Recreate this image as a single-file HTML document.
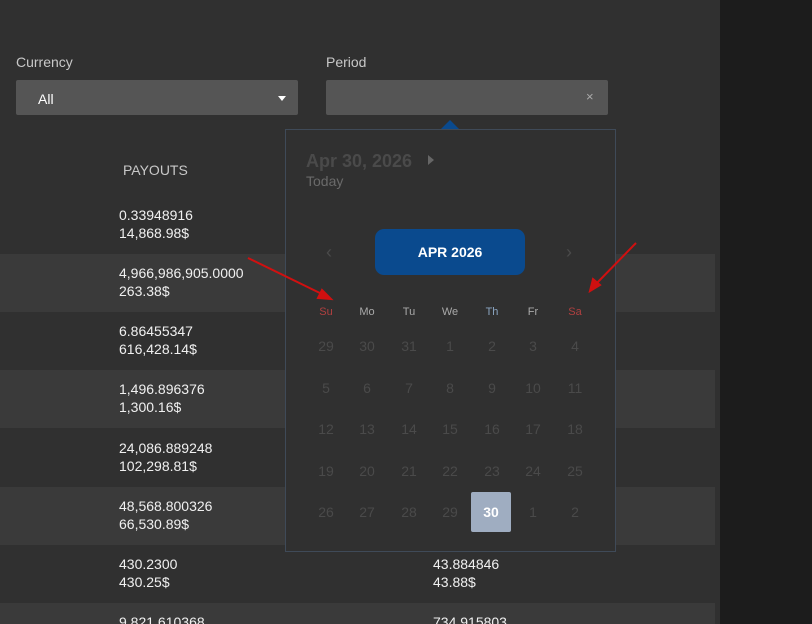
<!DOCTYPE html>
<html style="overflow:hidden;height:624px"><head><style>
body{margin:0;width:812px;height:624px;overflow:hidden;background:#303030;font-family:"Liberation Sans",sans-serif;position:relative}
.a{position:absolute}
.stripe{position:absolute;left:0;width:715px;height:58px;background:#3a3a3a}
.lbl{color:#c8c8c8;font-size:14px}
.val{color:#f0f0f0;font-size:14px;line-height:18px}
.cal{position:absolute;left:285px;top:129px;width:329px;height:421px;background:#303030;border:1px solid #3f4a58}
.d{position:absolute;width:40px;text-align:center;font-size:14px;color:#4a4a4a}
.w{position:absolute;width:40px;text-align:center;font-size:11px;color:#a9a9a9}
</style></head><body>
<div class="stripe" style="top:254px"></div>
<div class="stripe" style="top:370px"></div>
<div class="stripe" style="top:487px"></div>
<div class="stripe" style="top:603px;height:21px"></div>
<div class="a" style="left:720px;top:0;width:92px;height:624px;background:#1c1c1c"></div>
<div class="a lbl" style="left:16px;top:54px">Currency</div>
<div class="a lbl" style="left:326px;top:54px">Period</div>
<div class="a" style="left:16px;top:80px;width:282px;height:35px;background:#555;border-radius:2px"><span class="a" style="left:22px;top:11px;color:#fff;font-size:14px">All</span><span class="a" style="left:262px;top:16px;border:4px solid transparent;border-top:5px solid #fff;border-bottom:0"></span></div>
<div class="a" style="left:326px;top:80px;width:282px;height:35px;background:#555;border-radius:2px"><span class="a" style="left:260px;top:9px;color:#aaa;font-size:13px">×</span></div>
<div class="a lbl" style="left:123px;top:162px">PAYOUTS</div>
<div class="a val" style="left:119px;top:206px">0.33948916<br>14,868.98$</div>
<div class="a val" style="left:119px;top:264px">4,966,986,905.0000<br>263.38$</div>
<div class="a val" style="left:119px;top:322px">6.86455347<br>616,428.14$</div>
<div class="a val" style="left:119px;top:380px">1,496.896376<br>1,300.16$</div>
<div class="a val" style="left:119px;top:439px">24,086.889248<br>102,298.81$</div>
<div class="a val" style="left:119px;top:497px">48,568.800326<br>66,530.89$</div>
<div class="a val" style="left:119px;top:555px">430.2300<br>430.25$</div>
<div class="a val" style="left:119px;top:613px">9,821.610368</div>
<div class="a val" style="left:433px;top:555px">43.884846<br>43.88$</div>
<div class="a val" style="left:433px;top:613px">734.915803</div>
<div class="a" style="left:441px;top:120px;border:9px solid transparent;border-bottom:9px solid #0a4a8e;border-top:0"></div>
<div class="cal">
<div class="a" style="left:20px;top:21px;font-size:18px;font-weight:bold;color:#4a4a4a">Apr 30, 2026</div>
<div class="a" style="left:142px;top:25px;border:5px solid transparent;border-left:6px solid #666;border-right:0"></div>
<div class="a" style="left:20px;top:43px;font-size:14px;color:#6a6a6a">Today</div>
<div class="a" style="left:89px;top:99px;width:150px;height:46px;background:#0a4a8e;border-radius:9px;color:#fff;font-weight:bold;font-size:14px;text-align:center;line-height:46px">APR 2026</div>
<div class="a" style="left:40px;top:112px;color:#4a4a4a;font-size:18px">‹</div>
<div class="a" style="left:280px;top:112px;color:#4a4a4a;font-size:18px">›</div>
<div class="w" style="left:20px;top:176px;color:#b04040">Su</div>
<div class="w" style="left:61px;top:176px">Mo</div>
<div class="w" style="left:103px;top:176px">Tu</div>
<div class="w" style="left:144px;top:176px">We</div>
<div class="w" style="left:186px;top:176px;color:#8aa4c0">Th</div>
<div class="w" style="left:227px;top:176px">Fr</div>
<div class="w" style="left:269px;top:176px;color:#b04040">Sa</div>
<div id="g"></div>
<div class="a" style="left:185px;top:362px;width:40px;height:40px;background:#9fadc1;border-radius:2px;color:#fff;font-weight:bold;font-size:14px;text-align:center;line-height:40px">30</div>
</div>
<svg class="a" style="left:0;top:0" width="812" height="624"><g stroke="#d01010" stroke-width="2" fill="#d01010"><line x1="248" y1="258" x2="326" y2="296"/><polygon points="331,299 318,298 322,290"/><line x1="636" y1="243" x2="594" y2="286"/><polygon points="590,291 593,279 600,285"/></g></svg>
<script>
var n=[29,30,31,1,2,3,4,5,6,7,8,9,10,11,12,13,14,15,16,17,18,19,20,21,22,23,24,25,26,27,28,29,30,1,2],h='';
var xs=[20,61,103,144,186,227,269];
for(var i=0;i<35;i++){if(i==32)continue;h+='<div class="d" style="left:'+xs[i%7]+'px;top:'+(208+Math.floor(i/7)*41.5)+'px">'+n[i]+'</div>';}
document.getElementById('g').innerHTML=h;
</script>
</body></html>
